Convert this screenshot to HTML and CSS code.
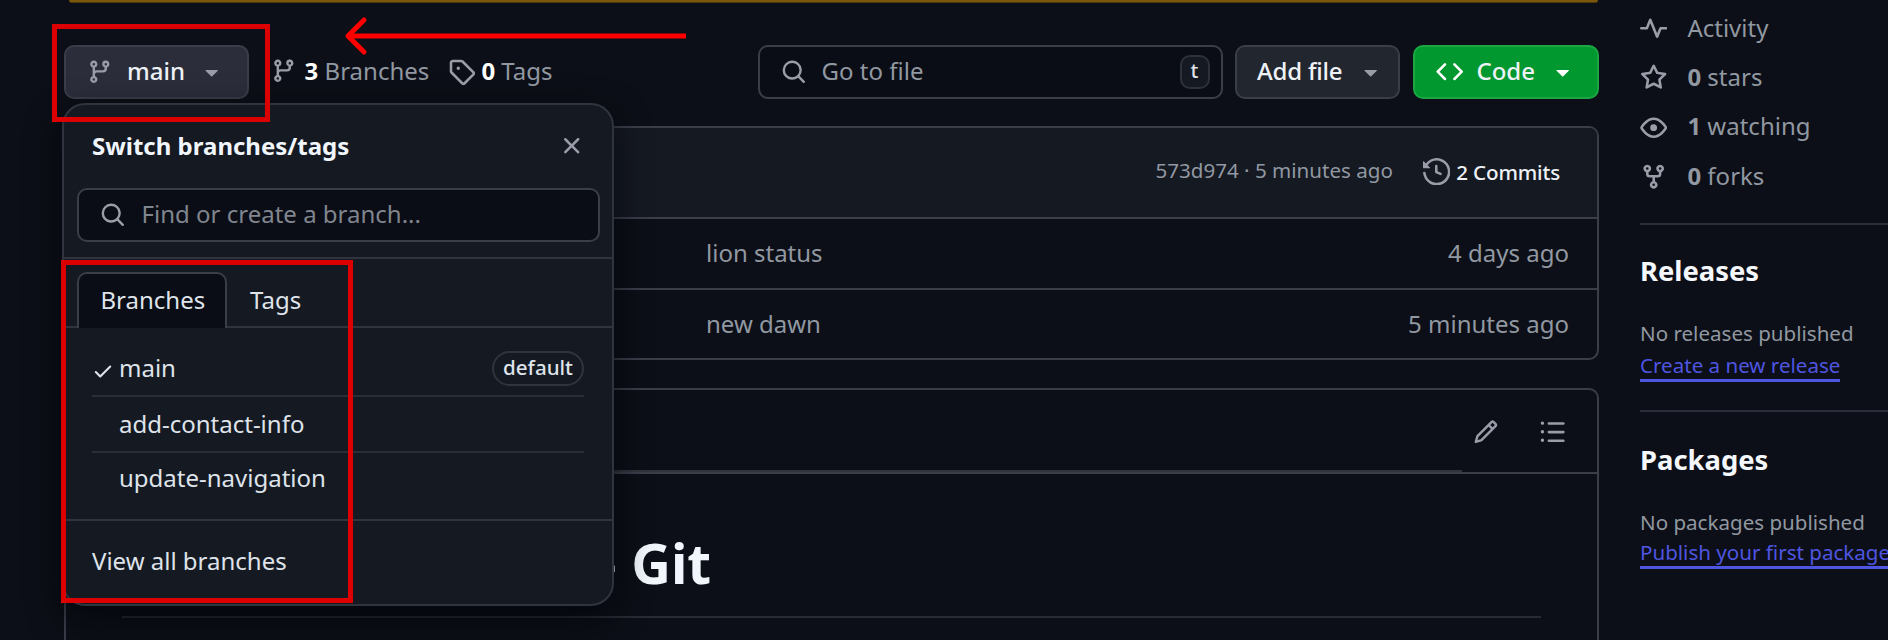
FILE: index.html
```
<!DOCTYPE html>
<html lang="en">
<head>
<meta charset="utf-8">
<title>Repository</title>
<link rel="stylesheet" href="styles.css">
</head>
<body>
<svg class="defs" width="0" height="0" aria-hidden="true">
  <symbol id="branch" viewBox="0 0 16 16"><path d="M9.5 3.25a2.25 2.25 0 1 1 3 2.122V6A2.5 2.5 0 0 1 10 8.5H6a1 1 0 0 0-1 1v1.128a2.251 2.251 0 1 1-1.5 0V5.372a2.25 2.25 0 1 1 1.5 0v1.836A2.493 2.493 0 0 1 6 7h4a1 1 0 0 0 1-1v-.628A2.25 2.25 0 0 1 9.5 3.25Zm-6 0a.75.75 0 1 0 1.5 0 .75.75 0 0 0-1.5 0Zm8.25-.75a.75.75 0 1 0 0 1.5.75.75 0 0 0 0-1.5ZM4.25 12a.75.75 0 1 0 0 1.5.75.75 0 0 0 0-1.5Z"/></symbol>
  <symbol id="tag" viewBox="0 0 16 16"><path d="M1 7.775V2.75C1 1.784 1.784 1 2.75 1h5.025c.464 0 .91.184 1.238.513l6.25 6.25a1.75 1.75 0 0 1 0 2.474l-5.026 5.026a1.75 1.75 0 0 1-2.474 0l-6.25-6.25A1.752 1.752 0 0 1 1 7.775Zm1.5 0c0 .066.026.13.073.177l6.25 6.25a.25.25 0 0 0 .354 0l5.025-5.025a.25.25 0 0 0 0-.354l-6.25-6.25a.25.25 0 0 0-.177-.073H2.75a.25.25 0 0 0-.25.25ZM6 5a1 1 0 1 1 0 2 1 1 0 0 1 0-2Z"/></symbol>
  <symbol id="search" viewBox="0 0 16 16"><path d="M10.68 11.74a6 6 0 0 1-7.922-8.982 6 6 0 0 1 8.982 7.922l3.04 3.04a.749.749 0 0 1-.326 1.275.749.749 0 0 1-.734-.215ZM11.5 7a4.499 4.499 0 1 0-8.997 0A4.499 4.499 0 0 0 11.5 7Z"/></symbol>
  <symbol id="caret" viewBox="0 0 16 16"><path d="m4.427 7.427 3.396 3.396a.25.25 0 0 0 .354 0l3.396-3.396A.25.25 0 0 0 11.396 7H4.604a.25.25 0 0 0-.177.427Z"/></symbol>
  <symbol id="code" viewBox="0 0 16 16"><path d="m11.28 3.22 4.25 4.25a.75.75 0 0 1 0 1.06l-4.25 4.25a.749.749 0 0 1-1.275-.326.749.749 0 0 1 .215-.734L13.94 8l-3.72-3.72a.749.749 0 0 1 .326-1.275.749.749 0 0 1 .734.215Zm-6.56 0a.751.751 0 0 1 1.042.018.751.751 0 0 1 .018 1.042L2.06 8l3.72 3.72a.749.749 0 0 1-.326 1.275.749.749 0 0 1-.734-.215L.47 8.53a.75.75 0 0 1 0-1.06Z"/></symbol>
  <symbol id="history" viewBox="0 0 16 16"><path d="m.427 1.927 1.215 1.215a8.002 8.002 0 1 1-1.6 5.685.75.75 0 1 1 1.493-.154 6.5 6.5 0 1 0 1.18-4.458l1.358 1.358A.25.25 0 0 1 3.896 6H.25A.25.25 0 0 1 0 5.75V2.104a.25.25 0 0 1 .427-.177ZM7.75 4a.75.75 0 0 1 .75.75v2.992l2.028.812a.75.75 0 0 1-.557 1.392l-2.5-1A.751.751 0 0 1 7 8.25v-3.5A.75.75 0 0 1 7.75 4Z"/></symbol>
  <symbol id="pencil" viewBox="0 0 16 16"><path d="M11.013 1.427a1.75 1.75 0 0 1 2.474 0l1.086 1.086a1.75 1.75 0 0 1 0 2.474l-8.61 8.61c-.21.21-.47.364-.756.445l-3.251.93a.75.75 0 0 1-.927-.928l.929-3.25c.081-.286.235-.547.445-.758l8.61-8.61Zm.176 4.823L9.75 4.81l-6.286 6.287a.253.253 0 0 0-.064.108l-.558 1.953 1.953-.558a.253.253 0 0 0 .108-.064Zm1.238-3.763a.25.25 0 0 0-.354 0L10.811 3.75l1.439 1.44 1.263-1.263a.25.25 0 0 0 0-.354Z"/></symbol>
  <symbol id="list" viewBox="0 0 16 16"><path d="M5.75 2.5h8.5a.75.75 0 0 1 0 1.5h-8.5a.75.75 0 0 1 0-1.5Zm0 5h8.5a.75.75 0 0 1 0 1.5h-8.5a.75.75 0 0 1 0-1.5Zm0 5h8.5a.75.75 0 0 1 0 1.5h-8.5a.75.75 0 0 1 0-1.5ZM2 14a1 1 0 1 1 0-2 1 1 0 0 1 0 2Zm1-6a1 1 0 1 1-2 0 1 1 0 0 1 2 0ZM2 4a1 1 0 1 1 0-2 1 1 0 0 1 0 2Z"/></symbol>
  <symbol id="pulse" viewBox="0 0 16 16"><path d="M6 2c.306 0 .582.187.696.471L10 10.731l1.304-3.26A.751.751 0 0 1 12 7h3.25a.75.75 0 0 1 0 1.5h-2.742l-1.812 4.528a.751.751 0 0 1-1.392 0L6 4.77 4.696 8.03A.75.75 0 0 1 4 8.5H.75a.75.75 0 0 1 0-1.5h2.742l1.812-4.529A.751.751 0 0 1 6 2Z"/></symbol>
  <symbol id="star" viewBox="0 0 16 16"><path d="M8 .25a.75.75 0 0 1 .673.418l1.882 3.815 4.21.612a.75.75 0 0 1 .416 1.279l-3.046 2.97.719 4.192a.751.751 0 0 1-1.088.791L8 12.347l-3.766 1.98a.75.75 0 0 1-1.088-.79l.72-4.194L.818 6.374a.75.75 0 0 1 .416-1.28l4.21-.611L7.327.668A.75.75 0 0 1 8 .25Zm0 2.445L6.615 5.5a.75.75 0 0 1-.564.41l-3.097.45 2.24 2.184a.75.75 0 0 1 .216.664l-.528 3.084 2.769-1.456a.75.75 0 0 1 .698 0l2.77 1.456-.53-3.084a.75.75 0 0 1 .216-.664l2.24-2.183-3.096-.45a.75.75 0 0 1-.564-.41L8 2.694Z"/></symbol>
  <symbol id="eye" viewBox="0 0 16 16"><path d="M8 2c1.981 0 3.671.992 4.933 2.078 1.27 1.091 2.187 2.345 2.637 3.023a1.62 1.62 0 0 1 0 1.798c-.45.678-1.367 1.932-2.637 3.023C11.67 13.008 9.981 14 8 14c-1.981 0-3.671-.992-4.933-2.078C1.797 10.83.88 9.576.43 8.898a1.62 1.62 0 0 1 0-1.798c.45-.677 1.367-1.931 2.637-3.022C4.33 2.992 6.019 2 8 2ZM1.679 7.932a.12.12 0 0 0 0 .136c.411.622 1.241 1.75 2.366 2.717C5.176 11.758 6.527 12.5 8 12.5c1.473 0 2.825-.742 3.955-1.715 1.124-.967 1.954-2.096 2.366-2.717a.12.12 0 0 0 0-.136c-.412-.621-1.242-1.75-2.366-2.717C10.824 4.242 9.473 3.5 8 3.5c-1.473 0-2.825.742-3.955 1.715-1.124.967-1.954 2.096-2.366 2.717ZM8 10a2 2 0 1 1-.001-3.999A2 2 0 0 1 8 10Z"/></symbol>
  <symbol id="fork" viewBox="0 0 16 16"><path d="M5 5.372v.878c0 .414.336.75.75.75h4.5a.75.75 0 0 0 .75-.75v-.878a2.25 2.25 0 1 1 1.5 0v.878a2.25 2.25 0 0 1-2.25 2.25h-1.5v2.128a2.251 2.251 0 1 1-1.5 0V8.5h-1.5A2.25 2.25 0 0 1 3.5 6.25v-.878a2.25 2.25 0 1 1 1.5 0ZM5 3.25a.75.75 0 1 0-1.5 0 .75.75 0 0 0 1.5 0Zm6.75.75a.75.75 0 1 0 0-1.5.75.75 0 0 0 0 1.5Zm-3 8.75a.75.75 0 1 0-1.5 0 .75.75 0 0 0 1.5 0Z"/></symbol>
  <symbol id="close" viewBox="0 0 16 16"><path d="M3.72 3.72a.75.75 0 0 1 1.06 0L8 6.94l3.22-3.22a.749.749 0 0 1 1.275.326.749.749 0 0 1-.215.734L9.06 8l3.22 3.22a.749.749 0 0 1-.326 1.275.749.749 0 0 1-.734-.215L8 9.06l-3.22 3.22a.751.751 0 0 1-1.042-.018.751.751 0 0 1-.018-1.042L6.94 8 3.72 4.78a.75.75 0 0 1 0-1.06Z"/></symbol>
  <symbol id="check" viewBox="0 0 16 16"><path d="M13.78 4.22a.75.75 0 0 1 0 1.06l-7.25 7.25a.75.75 0 0 1-1.06 0L2.22 9.28a.751.751 0 0 1 .018-1.042.751.751 0 0 1 1.042-.018L6 10.94l6.72-6.72a.75.75 0 0 1 1.06 0Z"/></symbol>
</svg>

<div class="page">
  <main class="content">
    <div class="notice"></div>

    <div class="toolbar">
      <div class="btn branch-btn"><svg class="icon small"><use href="#branch"/></svg><span>main</span><svg class="icon caret"><use href="#caret"/></svg></div>
      <div class="stat branches"><svg class="icon small"><use href="#branch"/></svg><span><b>3</b> Branches</span></div>
      <div class="stat tags"><svg class="icon"><use href="#tag"/></svg><span><b>0</b> Tags</span></div>
      <div class="input file-search"><svg class="icon mid"><use href="#search"/></svg><span>Go to file</span><kbd>t</kbd></div>
      <div class="btn add-btn"><span>Add file</span><svg class="icon caret"><use href="#caret"/></svg></div>
      <div class="btn code-btn"><svg class="icon"><use href="#code"/></svg><span>Code</span><svg class="icon caret"><use href="#caret"/></svg></div>
    </div>

    <section class="files">
      <div class="files-head">
        <span class="hash">573d974 · 5 minutes ago</span>
        <svg class="icon"><use href="#history"/></svg>
        <span class="commits">2 Commits</span>
      </div>
      <div class="file-row"><span>lion status</span><span>4 days ago</span></div>
      <div class="file-row"><span>new dawn</span><span>5 minutes ago</span></div>
    </section>

    <section class="readme">
      <div class="readme-head">
        <div class="readme-line"></div>
        <svg class="icon mid"><use href="#pencil"/></svg>
        <svg class="icon"><use href="#list"/></svg>
      </div>
      <h1>– Git</h1>
    </section>
  </main>

  <aside class="sidebar">
    <ul class="facts">
      <li><svg class="icon"><use href="#pulse"/></svg><span>Activity</span></li>
      <li><svg class="icon"><use href="#star"/></svg><span><b>0</b> stars</span></li>
      <li><svg class="icon"><use href="#eye"/></svg><span><b>1</b> watching</span></li>
      <li><svg class="icon"><use href="#fork"/></svg><span><b>0</b> forks</span></li>
    </ul>
    <section class="side-block">
      <h2>Releases</h2>
      <p>No releases published</p>
      <a>Create a new release</a>
    </section>
    <section class="side-block packages">
      <h2>Packages</h2>
      <p>No packages published</p>
      <a>Publish your first package</a>
    </section>
  </aside>
</div>

<div class="menu">
  <div class="menu-head"><span>Switch branches/tags</span><svg class="icon close"><use href="#close"/></svg></div>
  <div class="menu-search"><div class="input"><svg class="icon mid"><use href="#search"/></svg><span>Find or create a branch...</span></div></div>
  <div class="tabs"><div class="tab active">Branches</div><div class="tab">Tags</div></div>
  <ul class="branch-list">
    <li><svg class="check"><use href="#check"/></svg><span>main</span><span class="badge">default</span></li>
    <li><span>add-contact-info</span></li>
    <li><span>update-navigation</span></li>
  </ul>
  <div class="menu-foot">View all branches</div>
</div>

<div class="mark mark-button"></div>
<div class="mark mark-list"></div>
<svg class="arrow" width="346" height="44" viewBox="0 0 346 44"><path d="M342 22H5"/><path stroke-linecap="round" d="M20 6 4 22 20 38"/></svg>
</body>
</html>
```

FILE: styles.css
```
* { box-sizing: border-box; }
body {
  margin: 0;
  width: 1888px;
  height: 640px;
  overflow: hidden;
  background: #0c0f17;
  color: #9198a1;
  font: 24px/34px "Noto Sans", sans-serif;
  white-space: nowrap;
}
ul, h1, h2, p { margin: 0; padding: 0; list-style: none; }
.defs { display: block; position: absolute; }
.icon { width: 27.4px; height: 27.4px; flex: none; fill: #9a9da8; }
.icon.small { width: 25.6px; height: 25.6px; }
.icon.mid { width: 25.6px; height: 25.6px; }
.page { display: flex; height: 640px; }
.content { display: flex; flex-direction: column; width: 1535px; height: 640px; margin-left: 64px; flex: none; }
.notice { flex: none; height: 3px; margin: 0 1px 0 5px; background: #7a5708; border-bottom: 1px solid #4b380c; border-radius: 0 0 3px 3px; }

.toolbar { display: flex; flex: none; align-items: center; height: 54px; margin-top: 42px; }
.toolbar span { margin-top: -3px; }
.btn, .input {
  display: flex;
  align-items: center;
  height: 54px;
  border: 2px solid #3a3e49;
  border-radius: 10px;
}
.btn { color: #eef2f7; font-weight: 500; background: #22262f; }
.branch-btn { width: 184.5px; background: #2b2d3b; padding-left: 21px; }
.branch-btn span { margin-left: 14.5px; }
.branch-btn .caret { margin-left: 12.5px; }
.stat { display: flex; align-items: center; }
.stat b { color: #fff; }
.branches { margin-left: 22.5px; width: 176.5px; }
.branches .icon { margin-top: -2px; }
.branches span { margin-left: 8px; }
.tags span { margin-left: 6.5px; }
.input { background: #0a0d15; }
.file-search { width: 465px; margin-left: auto; padding: 0 11px 0 21px; }
.input span { margin: -3px 0 0 15.5px; }
kbd {
  margin-left: auto;
  width: 30px;
  height: 34px;
  border: 2px solid #2d313b;
  border-radius: 10px;
  background: #151922;
  color: #dde1e8;
  font: 500 20.5px/26px "Noto Sans", sans-serif;
  text-align: center;
}
.add-btn { width: 165px; margin-left: 12.5px; padding-left: 20px; }
.add-btn span { letter-spacing: -.2px; }
.add-btn .caret { margin-left: 14.5px; }
.code-btn { width: 186px; margin-left: 13px; padding-left: 21px; background: #00982f; border-color: #1ba645; }
.code-btn span { margin-left: 13px; }
.code-btn .icon { fill: #fff; margin-top: -1px; }
.code-btn .caret { margin-left: 14px; }

.files { flex: none; margin-top: 27px; height: 234px; border: 2px solid #3a3e49; border-radius: 10px; overflow: hidden; }
.files-head { display: flex; align-items: center; height: 89px; padding: 0 37px 2px 0; background: #151922; font-size: 20.57px; }
.hash { margin: -3px 0 0 auto; }
.files-head .icon { margin: 0 6px 0 30px; }
.commits { color: #eef2f7; font-weight: 500; letter-spacing: -.15px; margin-top: 1px; }
.file-row { display: flex; justify-content: space-between; height: 71px; padding: 17px 28px 0 640px; border-top: 2px solid #3a3e49; }

.readme { flex: 1; min-height: 0; margin-top: 28px; border: 2px solid #3a3e49; border-bottom: 0; border-radius: 10px 10px 0 0; }
.readme-head { position: relative; display: flex; align-items: center; justify-content: flex-end; gap: 40px; height: 84px; padding: 2px 31px 0 0; border-bottom: 2px solid #3a3e49; }
.readme-line { position: absolute; left: 0; bottom: 0; width: 1396px; height: 2px; background: #30343e; }
.readme h1 { margin: 43px 56px 0; padding-left: 467.5px; height: 101px; color: #f0f6fc; font-size: 54.9px; font-weight: 700; line-height: 91px; border-bottom: 2px solid #272b34; }

.sidebar { width: 248px; margin-left: 41px; overflow: hidden; flex: none; }
.facts { margin-top: 4px; }
.facts li { display: flex; align-items: center; height: 49.3px; gap: 20px; }
.facts span { margin-top: -2px; }
.side-block { margin-top: 22px; height: 187px; border-top: 2px solid #2b2e3a; padding-top: 26px; font-size: 20.57px; }
.side-block.packages { margin-top: 0; padding-top: 28px; }
.side-block h2 { font-size: 27.4px; line-height: 40px; color: #f4f7fb; }
.side-block p { margin-top: 26px; line-height: 32px; }
.side-block a { display: block; width: max-content; height: 30px; line-height: 27px; margin-top: 3px; color: #4e55e0; border-bottom: 3px solid #4e55e0; }
.side-block.packages a { margin-top: 1px; }

.menu { position: absolute; left: 62px; top: 103px; width: 552px; height: 503px; border: 2px solid #30343e; border-radius: 23px; background: #151922; box-shadow: 0 12px 34px rgba(1, 4, 9, .75); color: #dfe3ea; }
.menu-head { display: flex; justify-content: space-between; align-items: center; height: 83px; padding: 0 27px 1px 28px; color: #f0f6fc; font-weight: 700; }
.menu-search { height: 71px; padding: 0 12px 0 13px; border-bottom: 2px solid #30343e; }
.menu-search .input { padding-left: 21px; color: #80858f; }
.menu-search .input span { margin-left: 16px; }
.tabs { display: flex; height: 69px; padding: 13px 0 0 13px; box-shadow: inset 0 -2px #30343e; }
.tab { width: 150px; padding: 11px 0 0 23px; }
.tab.active { border: 2px solid #3a3e49; border-bottom: 0; border-radius: 10px 10px 0 0; background: #0a0d15; padding: 9px 0 0 21.5px; }
.branch-list { height: 191px; padding: 13px 28px 0; }
.branch-list li { display: flex; align-items: center; height: 56px; padding-left: 27px; border-bottom: 2px solid #2b2e38; }
.branch-list li:last-child { border: 0; height: 50px; }
.check { width: 22px; height: 22px; margin: 6px 5px 0 -27px; fill: #dfe3ea; }
.badge { margin-left: auto; width: 92px; height: 35px; border: 2px solid #30343e; border-radius: 18px; font-size: 20.57px; font-weight: 500; line-height: 28px; text-align: center; }
.menu-foot { border-top: 2px solid #30343e; padding: 23px 28px; }

.mark { position: absolute; border: 5px solid #dd0000; }
.mark-button { left: 52px; top: 24px; width: 218px; height: 98px; }
.mark-list { left: 61px; top: 260px; width: 292px; height: 343px; }
.arrow { position: absolute; left: 344px; top: 14px; fill: none; stroke: #f00; stroke-width: 5px; stroke-linejoin: round; }
```
